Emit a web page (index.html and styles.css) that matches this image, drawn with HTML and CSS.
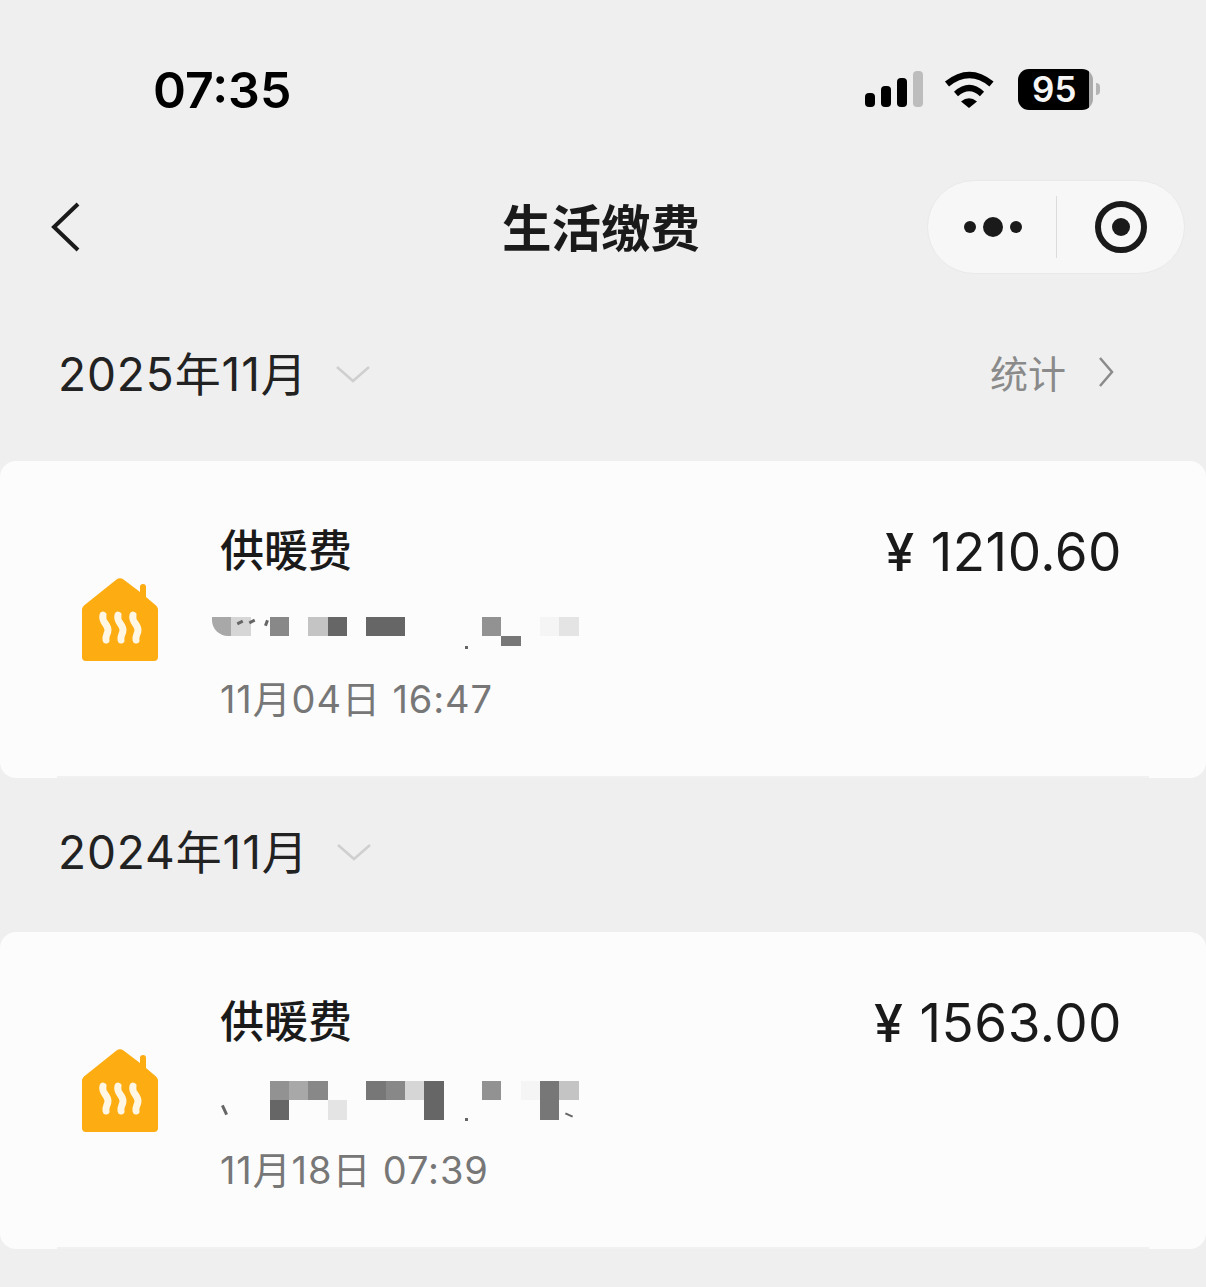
FILE: index.html

```html
<!DOCTYPE html>
<html lang="zh-CN">
<head>
  <meta charset="UTF-8" />
  <meta name="viewport" content="width=device-width, initial-scale=1.0" />
  <title>生活缴费</title>
  <link rel="stylesheet" href="styles.css">
</head>
<body>
  <div class="status">
    <span class="time">07:35</span>
    <div class="status-icons">
      <div class="signal">
        <i class="bar b1"></i><i class="bar b2"></i><i class="bar b3"></i><i class="bar b4"></i>
      </div>
      <svg class="wifi" width="52" height="38" viewBox="0 0 52 38">
        <path d="M3 14Q25.5 -4 47.5 14" fill="none" stroke="#000" stroke-width="6.5"/>
        <path d="M12 24Q25.5 12 38 24" fill="none" stroke="#000" stroke-width="6"/>
        <path d="M17 31.5Q25 25 33 31.5L25 38Z" fill="#000"/>
      </svg>
      <div class="battery">95</div>
    </div>
  </div>

  <div class="nav">
    <svg class="back" width="32" height="52" viewBox="0 0 32 52">
      <path d="M28 3L4 26L28 49" fill="none" stroke="#1a1a1a" stroke-width="4"/>
    </svg>
    <h1>生活缴费</h1>
    <div class="capsule">
      <div class="dots"><i class="dot"></i><i class="dot big"></i><i class="dot"></i></div>
      <i class="divider"></i>
      <svg width="52" height="52" viewBox="0 0 52 52">
        <circle cx="26" cy="26" r="23" fill="none" stroke="#1a1a1a" stroke-width="6"/>
        <circle cx="26" cy="26" r="9" fill="#1a1a1a"/>
      </svg>
    </div>
  </div>

  <div class="month first">
    <span class="month-name">2025年11月</span>
    <svg class="caret" width="36" height="20" viewBox="0 0 36 20">
      <path d="M2 3L18 17L34 3" fill="none" stroke="#cfcfcf" stroke-width="2.5"/>
    </svg>
    <span class="stats">统计</span>
    <svg class="more" width="16" height="32" viewBox="0 0 16 32">
      <path d="M2 2L14 16L2 30" fill="none" stroke="#8a8a8a" stroke-width="2.5"/>
    </svg>
  </div>

  <div class="card">
    <svg class="house" width="76" height="84" viewBox="0 0 76 84">
      <path d="M34.5 1.5Q38 -1 41.500 1.500L58 14V9Q58 6 61 6T64 9V19L74 27.500Q76 29.500 76 32V79Q76 83 72 83H4Q0 83 0 79V32Q0 29.500 2 27.500Z" fill="#fdac12"/>
      <g fill="none" stroke="#fff6e3" stroke-width="7" stroke-linecap="round">
        <path d="M21 37C19 44 26 46 26 52C26 56 23 58 24 62"/>
        <path d="M36 37C34 44 41 46 41 52C41 56 38 58 39 62"/>
        <path d="M51 37C49 44 56 46 56 52C56 56 53 58 54 62"/>
      </g>
    </svg>
    <div class="info">
      <div class="name">供暖费</div>
      <div class="mosaic mosaic-a">
        <i class="round g1"></i><i class="g2"></i><i></i><i class="g3"></i><i></i><i class="g4"></i><i class="g5"></i><i></i><i class="g5"></i><i class="g5"></i><i></i><i></i><i></i><i></i><i class="g6"></i><i></i><i></i><i class="g7"></i><i class="g8"></i>
        <i></i><i></i><i></i><i></i><i></i><i></i><i></i><i></i><i></i><i></i><i></i><i></i><i></i><i></i><i></i><i class="g9 short"></i><i></i><i></i><i></i>
        <b class="speck s1"></b><b class="speck s5"></b><b class="speck s6"></b><b class="speck s7"></b>
      </div>
      <div class="date">11月04日 16:47</div>
    </div>
    <div class="amount"><span class="yen">¥</span>1210.60</div>
  </div>

  <div class="month">
    <span class="month-name">2024年11月</span>
    <svg class="caret" width="36" height="20" viewBox="0 0 36 20">
      <path d="M2 3L18 17L34 3" fill="none" stroke="#cfcfcf" stroke-width="2.5"/>
    </svg>
  </div>

  <div class="card">
    <svg class="house" width="76" height="84" viewBox="0 0 76 84">
      <path d="M34.5 1.5Q38 -1 41.500 1.500L58 14V9Q58 6 61 6T64 9V19L74 27.500Q76 29.500 76 32V79Q76 83 72 83H4Q0 83 0 79V32Q0 29.500 2 27.500Z" fill="#fdac12"/>
      <g fill="none" stroke="#fff6e3" stroke-width="7" stroke-linecap="round">
        <path d="M21 37C19 44 26 46 26 52C26 56 23 58 24 62"/>
        <path d="M36 37C34 44 41 46 41 52C41 56 38 58 39 62"/>
        <path d="M51 37C49 44 56 46 56 52C56 56 53 58 54 62"/>
      </g>
    </svg>
    <div class="info">
      <div class="name">供暖费</div>
      <div class="mosaic mosaic-b">
        <i></i><i></i><i></i><i class="g6"></i><i class="g1"></i><i class="g3"></i><i></i><i></i><i class="g9"></i><i class="g3"></i><i class="g2"></i><i class="g5"></i><i></i><i></i><i class="g6"></i><i></i><i class="g7"></i><i class="g9"></i><i class="g4"></i>
        <i></i><i></i><i></i><i class="g5"></i><i></i><i></i><i class="g8"></i><i></i><i></i><i></i><i></i><i class="g5"></i><i></i><i></i><i></i><i></i><i></i><i class="g9"></i><i></i>
        <b class="speck s2"></b><b class="speck s3"></b><b class="speck s4"></b>
      </div>
      <div class="date">11月18日 07:39</div>
    </div>
    <div class="amount"><span class="yen">¥</span>1563.00</div>
  </div>
</body>
</html>
```

FILE: styles.css

```css
* {
  box-sizing: border-box;
}
body {
  margin: 0;
  height: 1287px;
  overflow: hidden;
  background: #efefef;
  color: #1a1a1a;
  font-family: Inter, "Noto Sans CJK SC", sans-serif;
}
i {
  display: block;
}

/* status bar */
.status {
  height: 180px;
  padding: 0 113px 0 153px;
  display: flex;
  justify-content: space-between;
}
.time {
  margin-top: 60px;
  font-size: 50px;
  line-height: 60px;
  font-weight: 600;
  color: #000;
}
.status-icons {
  margin-top: 69px;
  display: flex;
  align-items: flex-start;
}
.signal {
  height: 38px;
  margin-right: 21px;
  display: flex;
  align-items: flex-end;
  gap: 6px;
}
.bar {
  width: 10px;
  border-radius: 4px;
  background: #000;
}
.b1 { height: 14px; }
.b2 { height: 21px; }
.b3 { height: 29px; }
.b4 { height: 36px; background: #bdbdbd; }
.wifi {
  margin: 1px 22px 0 0;
}
.battery {
  position: relative;
  width: 75px;
  height: 41px;
  border-radius: 11px;
  background: linear-gradient(to right, #000 71px, #aaa 71px);
  color: #f5f5f5;
  font-size: 35px;
  line-height: 41px;
  font-weight: 600;
  padding-left: 14px;
}
.battery::after {
  content: "";
  position: absolute;
  left: 78px;
  top: 14px;
  width: 4px;
  height: 12px;
  border-radius: 0 4px 4px 0;
  background: #b5b5b5;
}

/* title bar */
.nav {
  height: 94px;
  padding: 0 21px 0 17px;
  display: grid;
  grid-template-columns: 1fr auto 1fr;
  align-items: center;
}
.back {
  margin-left: 33px;
}
h1 {
  margin: 4px 0 0;
  font-size: 49.500px;
  line-height: 88px;
  font-weight: 600;
}
.capsule {
  justify-self: end;
  width: 258px;
  height: 94px;
  padding-left: 36px;
  border: 1px solid #e9e9e9;
  border-radius: 47px;
  background: #f7f7f7;
  display: flex;
  align-items: center;
}
.dots {
  width: 58px;
  display: flex;
  align-items: center;
  justify-content: space-between;
}
.dot {
  width: 12px;
  height: 12px;
  border-radius: 50%;
  background: #1a1a1a;
}
.dot.big {
  width: 20px;
  height: 20px;
}
.divider {
  width: 1px;
  height: 62px;
  margin: 0 38px 0 34px;
  background: #dcdcdc;
}

/* month rows */
.month {
  height: 68px;
  margin: 40px 0 46px;
  padding: 0 92px 0 58px;
  display: flex;
  align-items: center;
}
.month.first {
  margin: 66px 0 53px;
}
.month-name {
  margin-top: -6px;
  font-size: 46px;
  font-weight: 400;
  letter-spacing: 0.900px;
  color: #222;
}
.caret {
  margin-left: 27px;
}
.stats {
  margin: -6px 0 0 auto;
  font-size: 38px;
  color: #8a8a8a;
}
.more {
  margin: -4px 0 0 32px;
}

/* bill cards */
.card {
  position: relative;
  height: 317px;
  padding: 0 84px 0 82px;
  border-radius: 16px;
  background: #fcfcfc;
  display: flex;
  align-items: center;
}
.card::after {
  content: "";
  position: absolute;
  left: 57px;
  right: 57px;
  bottom: 0;
  height: 2px;
  background: #f1f1f1;
}
.house {
  flex: none;
  margin-right: 62px;
}
.info {
  flex: 1;
  align-self: flex-start;
  padding-top: 64px;
}
.name {
  font-size: 44px;
  line-height: 52px;
  font-weight: 500;
}
.mosaic {
  position: relative;
  height: 38.600px;
  margin-left: -8px;
  display: grid;
  grid-template-columns: repeat(19, 19.300px);
  grid-auto-rows: 19.300px;
}
.mosaic-a {
  margin-top: 40px;
  margin-bottom: 19px;
}
.mosaic-b {
  margin-top: 33px;
  margin-bottom: 26px;
}
.round { border-radius: 0 0 0 16px; }
.short { height: 10px; }
.g1 { background: #a8a8a8; }
.g2 { background: #d6d6d6; }
.g3 { background: #888; }
.g4 { background: #c4c4c4; }
.g5 { background: #666; }
.g6 { background: #929292; }
.g7 { background: #f5f5f5; }
.g8 { background: #e4e4e4; }
.g9 { background: #777; }
.speck {
  position: absolute;
  width: 3px;
  height: 3px;
  background: #666;
}
.s1 { left: 253px; top: 29px; }
.s2 { left: 253px; top: 37px; }
.s3 { left: 11px; top: 24px; width: 3px; height: 10px; transform: rotate(-25deg); }
.s4 { left: 353px; top: 33px; width: 8px; height: 2px; transform: rotate(25deg); }
.s5 { left: 25px; top: 4px; width: 6px; height: 3px; transform: rotate(-25deg); }
.s6 { left: 37px; top: 3px; width: 6px; height: 3px; transform: rotate(-25deg); }
.s7 { left: 53px; top: 3px; width: 3px; height: 6px; transform: rotate(20deg); }
.date {
  font-size: 38px;
  line-height: 48px;
  letter-spacing: 0.900px;
  color: #777;
}
.amount {
  flex: none;
  align-self: flex-start;
  margin-top: 61px;
  font-size: 53px;
  line-height: 60px;
  font-weight: 400;
  letter-spacing: 0.500px;
}
.yen {
  margin-right: 16px;
  font-size: 52px;
  font-weight: 500;
}
```
